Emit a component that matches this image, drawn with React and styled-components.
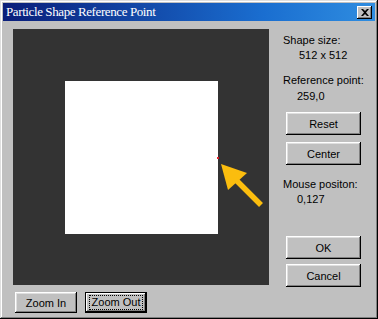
import React from 'react';
import styled, { createGlobalStyle } from 'styled-components';

const Global = createGlobalStyle`
  html, body { margin: 0; padding: 0; background: #c0c0c0; }
  body { font-family: "Liberation Sans", Arial, sans-serif; font-size: 11px; color: #000; }
`;

const Window = styled.div`
  box-sizing: border-box;
  width: 378px;
  height: 319px;
  background: #c0c0c0;
  padding: 3px;
  box-shadow: inset -1px -1px #000, inset 1px 1px #dfdfdf, inset -2px -2px #808080, inset 2px 2px #fff;
  display: flex;
  flex-direction: column;
`;

const TitleBar = styled.div`
  height: 18px;
  display: flex;
  align-items: center;
  justify-content: space-between;
  padding: 0 3px 0 3px;
  background: linear-gradient(to right, #0a1e7a, #1a6ed0 70%, #2f8de0);
  color: #fff;
`;

const Title = styled.span`
  font-family: "Liberation Serif", "Times New Roman", serif;
  font-size: 13px;
  letter-spacing: -0.4px;
  white-space: nowrap;
`;

const CloseButton = styled.div`
  width: 15px;
  height: 13px;
  background: #c0c0c0;
  box-shadow: inset -1px -1px #000, inset 1px 1px #fff, inset -2px -2px #808080;
  display: flex;
  align-items: center;
  justify-content: center;
`;

const Body = styled.div`
  display: flex;
  padding: 8px 0 0 10px;
`;

const LeftCol = styled.div`
  display: flex;
  flex-direction: column;
`;

const Canvas = styled.div`
  position: relative;
  width: 256px;
  height: 256px;
  background: #333333;
  display: flex;
  align-items: center;
  justify-content: center;
`;

const Shape = styled.div`
  width: 153px;
  height: 153px;
  background: #fff;
`;

const RefDot = styled.div`
  position: absolute;
  left: 204px;
  top: 128px;
  width: 2px;
  height: 2px;
  background: #e0202a;
`;

const Arrow = styled.svg`
  position: absolute;
  left: 200px;
  top: 120px;
`;

const ZoomRow = styled.div`
  display: flex;
  gap: 8px;
  padding: 7px 0 0 2px;
`;

const Button = styled.div`
  box-sizing: border-box;
  width: ${p => p.$w || 75}px;
  height: ${p => p.$h || 23}px;
  display: flex;
  align-items: center;
  justify-content: center;
  background: #c0c0c0;
  box-shadow: ${p => p.$default
    ? 'inset 0 0 0 1px #000, inset -2px -2px #000, inset 2px 2px #fff, inset -3px -3px #808080'
    : 'inset -1px -1px #000, inset 1px 1px #fff, inset -2px -2px #808080, inset 2px 2px #dfdfdf'};
  margin-left: ${p => p.$ml || 0}px;
  margin-top: ${p => p.$mt || 0}px;
`;

const Focus = styled.span`
  outline: 1px dotted #000;
  outline-offset: 0px;
  padding: 0 2px;
  line-height: 13px;
`;

const RightCol = styled.div`
  display: flex;
  flex-direction: column;
  padding: 5px 0 0 14px;
`;

const Label = styled.div`
  line-height: 13px;
  height: 13px;
  white-space: nowrap;
  margin-left: ${p => p.$ml || 0}px;
  margin-top: ${p => p.$mt || 0}px;
`;

export default function App() {
  return (
    <>
      <Global />
      <Window>
        <TitleBar>
          <Title>Particle Shape Reference Point</Title>
          <CloseButton>
            <svg width="8" height="7" viewBox="0 0 8 7">
              <path d="M0 0 L2 0 L4 2 L6 0 L8 0 L5 3.5 L8 7 L6 7 L4 5 L2 7 L0 7 L3 3.5 Z" fill="#000" />
            </svg>
          </CloseButton>
        </TitleBar>
        <Body>
          <LeftCol>
            <Canvas>
              <Shape />
              <RefDot />
              <Arrow width="64" height="90" viewBox="0 0 64 90">
                <polygon points="8,15 15,41 34,24" fill="#fbbd0e" />
                <line x1="22" y1="30" x2="48" y2="56" stroke="#fbbd0e" strokeWidth="5.5" />
              </Arrow>
            </Canvas>
            <ZoomRow>
              <Button $w={62} $h={21}>Zoom In</Button>
              <Button $w={62} $h={21} $default><Focus>Zoom Out</Focus></Button>
            </ZoomRow>
          </LeftCol>
          <RightCol>
            <Label>Shape size:</Label>
            <Label $ml={16} $mt={2}>512 x 512</Label>
            <Label $mt={12}>Reference point:</Label>
            <Label $ml={14} $mt={3}>259,0</Label>
            <Button $ml={3} $mt={9}>Reset</Button>
            <Button $ml={3} $mt={7}>Center</Button>
            <Label $mt={13}>Mouse positon:</Label>
            <Label $ml={14} $mt={2}>0,127</Label>
            <Button $ml={3} $mt={30}>OK</Button>
            <Button $ml={3} $mt={5}>Cancel</Button>
          </RightCol>
        </Body>
      </Window>
    </>
  );
}
